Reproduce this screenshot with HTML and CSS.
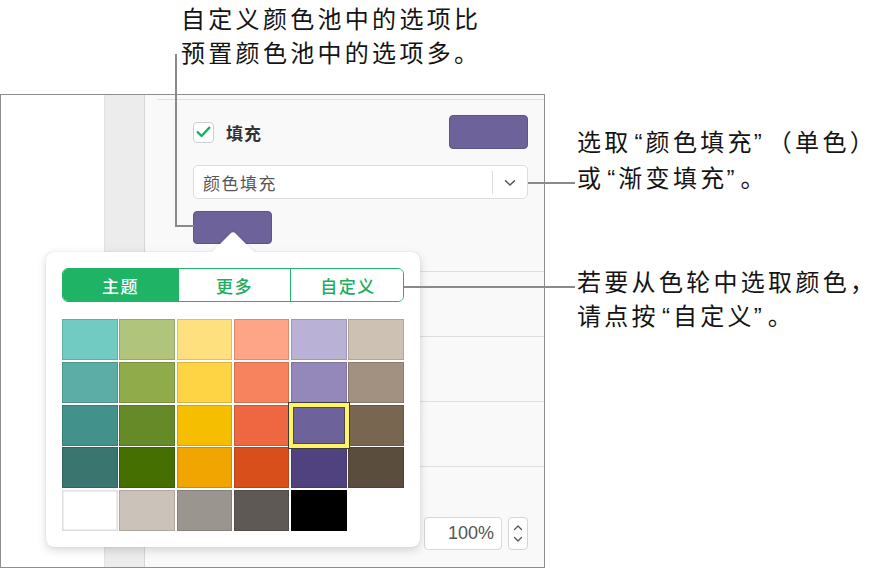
FILE: index.html
```html
<!DOCTYPE html>
<html lang="zh-CN">
<head>
<meta charset="utf-8">
<title>颜色填充</title>
<link rel="stylesheet" href="styles.css">
</head>
<body>
<div class="stage">
  <div class="window">
    <div class="canvas"></div>
    <div class="strip"></div>
    <div class="panel">
      <div class="panel-top"></div>
      <div class="fill-section">
        <div class="fill-row">
          <div class="check">
            <span class="box">
              <svg width="20" height="20" viewBox="0 0 20 20"><path d="M3.8 10.2 L8 14.2 L16.2 5.4" fill="none" stroke="#14b15e" stroke-width="2.4" stroke-linecap="round" stroke-linejoin="round"/></svg>
            </span>
            <span class="check-label">填充</span>
          </div>
          <div class="swatch swatch-big"></div>
        </div>
        <div class="select">
          <span class="select-text">颜色填充</span>
          <span class="select-div"></span>
          <svg class="select-chev" width="12" height="8" viewBox="0 0 12 8"><path d="M1.5 1.8 L6 6 L10.5 1.8" fill="none" stroke="#555" stroke-width="1.5" stroke-linecap="round" stroke-linejoin="round"/></svg>
        </div>
        <div class="swatch swatch-small"></div>
      </div>
      <div class="row"></div>
      <div class="row"></div>
      <div class="row"></div>
      <div class="bottom">
        <div class="pct">100%</div>
        <div class="stepper">
          <svg width="10" height="7" viewBox="0 0 10 7"><path d="M1.5 5.5 L5 2 L8.5 5.5" fill="none" stroke="#555" stroke-width="1.3" stroke-linecap="round" stroke-linejoin="round"/></svg>
          <svg width="10" height="7" viewBox="0 0 10 7"><path d="M1.5 1.5 L5 5 L8.5 1.5" fill="none" stroke="#555" stroke-width="1.3" stroke-linecap="round" stroke-linejoin="round"/></svg>
        </div>
      </div>
    </div>
  </div>

  <div class="popover">
    <svg class="arrow" width="44" height="22" viewBox="0 0 44 22"><path d="M0 22 L19.5 2.5 Q22 0 24.5 2.5 L44 22 Z" fill="#fff"/></svg>
    <div class="tabs">
      <div class="tab active">主题</div>
      <div class="tab">更多</div>
      <div class="tab">自定义</div>
    </div>
    <div class="grid">
      <div class="cell c-72cbc3"></div>
      <div class="cell c-b1c47c"></div>
      <div class="cell c-fee17e"></div>
      <div class="cell c-fea588"></div>
      <div class="cell c-b9b1d6"></div>
      <div class="cell c-cdc1b4"></div>

      <div class="cell c-5cada5"></div>
      <div class="cell c-8fab4a"></div>
      <div class="cell c-fed445"></div>
      <div class="cell c-f7825e"></div>
      <div class="cell c-9488ba"></div>
      <div class="cell c-a29180"></div>

      <div class="cell c-42918a"></div>
      <div class="cell c-678a28"></div>
      <div class="cell c-f5bf00"></div>
      <div class="cell c-ee6741"></div>
      <div class="cell c-6d6299 selected"></div>
      <div class="cell c-786651"></div>

      <div class="cell c-3a7570"></div>
      <div class="cell c-456f00"></div>
      <div class="cell c-f0a500"></div>
      <div class="cell c-d84f1c"></div>
      <div class="cell c-50427f"></div>
      <div class="cell c-5b4d3e"></div>

      <div class="cell c-ffffff"></div>
      <div class="cell c-cbc3ba"></div>
      <div class="cell c-9a958f"></div>
      <div class="cell c-5e5955"></div>
      <div class="cell c-000000"></div>
    </div>
  </div>

  <div class="leader ln-v"></div>
  <div class="leader ln-h1"></div>
  <div class="leader ln-h2"></div>
  <div class="leader ln-h3"></div>

  <div class="callout callout-top">自定义颜色池中的选项比<br>预置颜色池中的选项多。</div>
  <div class="callout callout-fill">选取<span class="q">“</span>颜色填充<span class="qc">”</span>（单色）<br>或<span class="q">“</span>渐变填充<span class="qc">”</span>。</div>
  <div class="callout callout-custom">若要从色轮中选取颜色，<br>请点按<span class="q">“</span>自定义<span class="qc">”</span>。</div>
</div>
</body>
</html>
```

FILE: styles.css
```css
* { box-sizing: border-box; }
html, body { margin: 0; padding: 0; background: #fff; }
body { font-family: "Noto Sans CJK SC", "Noto Sans", sans-serif; text-spacing-trim: space-all; }

.stage {
  position: relative;
  width: 888px;
  height: 569px;
  padding-top: 94px;
  overflow: hidden;
  background: #fff;
}

.window {
  display: flex;
  width: 545px;
  height: 474px;
  border: 1px solid #8e8e8e;
  background: #fff;
}

.canvas { width: 103px; background: #fff; }

.strip {
  width: 41px;
  background: #ececec;
  border-left: 1px solid #e2e2e2;
  border-right: 1px solid #d6d6d6;
}

.panel {
  flex: 1;
  display: flex;
  flex-direction: column;
  background: #f9f9f9;
  padding-top: 4px;
}

.panel-top {
  margin-left: 12px;
  height: 1px;
  background: #dedede;
}

.fill-section {
  margin-left: 12px;
  padding: 15px 16px 27px 36px;
  border-bottom: 1px solid #dedede;
}

.fill-row {
  display: flex;
  align-items: center;
  justify-content: space-between;
  height: 34px;
}

.check { display: flex; align-items: center; gap: 12px; }

.box {
  width: 21px;
  height: 21px;
  border: 1px solid #cfcfcf;
  border-radius: 4px;
  background: #fff;
  display: flex;
  align-items: center;
  justify-content: center;
}

.check-label {
  font-size: 17px;
  font-weight: 700;
  color: #333;
  letter-spacing: 1px;
}

.swatch {
  background: #6d6299;
  border: 1px solid #5d5289;
  border-radius: 4px;
}
.swatch-big { width: 79px; height: 34px; }
.swatch-small { width: 79px; height: 33px; margin-top: 12px; }

.select {
  margin-top: 16px;
  height: 34px;
  display: flex;
  align-items: center;
  background: #fff;
  border: 1px solid #dcdcdc;
  border-radius: 5px;
  padding-left: 9px;
}
.select-text {
  flex: 1;
  font-size: 17px;
  color: #555;
  letter-spacing: 1.5px;
}
.select-div {
  width: 1px;
  height: 23px;
  background: #dadada;
}
.select-chev { margin: 1px 11px 0 11px; }

.row {
  margin-left: 12px;
  height: 65px;
  border-bottom: 1px solid #dedede;
}

.bottom {
  display: flex;
  justify-content: flex-end;
  gap: 6px;
  padding: 50px 16px 0 0;
}

.pct {
  width: 78px;
  height: 33px;
  background: #fff;
  border: 1px solid #d8d8d8;
  border-radius: 4px;
  font-family: "Liberation Sans", Arial, sans-serif;
  font-size: 18px;
  color: #555;
  text-align: right;
  padding-right: 7px;
  line-height: 31px;
}

.stepper {
  width: 20px;
  height: 33px;
  background: #fff;
  border: 1px solid #d4d4d4;
  border-radius: 4px;
  display: flex;
  flex-direction: column;
  align-items: center;
  justify-content: center;
  gap: 5px;
}

/* popover */
.popover {
  position: absolute;
  left: 46px;
  top: 252px;
  width: 374px;
  height: 295px;
  background: #fff;
  border-radius: 8px;
  box-shadow: 0 0 1px rgba(0,0,0,0.18), 0 3px 10px rgba(0,0,0,0.16);
  padding: 16px;
}

.arrow {
  position: absolute;
  left: 165px;
  top: -21px;
  filter: drop-shadow(0 -1px 1px rgba(0,0,0,0.06));
}

.tabs {
  display: grid;
  grid-template-columns: 115px 112px 115px;
  width: 342px;
  height: 34px;
  border: 1.5px solid #22b567;
  border-radius: 6px;
  overflow: hidden;
}

.tab {
  display: flex;
  align-items: center;
  justify-content: center;
  font-size: 17px;
  font-weight: 500;
  letter-spacing: 1.5px;
  color: #1cae5f;
  background: #fff;
}
.tab + .tab { border-left: 1.5px solid #22b567; }
.tab.active { background: #1fb465; color: #fff; }

.grid {
  margin-top: 17px;
  width: 342px;
  display: grid;
  grid-template-columns: repeat(6, 1fr);
  grid-auto-rows: 41px;
  gap: 1.8px;
}

.cell { box-shadow: inset 0 0 0 1px rgba(0,0,0,0.14); }
.cell.selected {
  position: relative;
  z-index: 1;
  box-shadow: 0 0 0 2px #fff463, 0 0 0 3px #3c3c3c, inset 0 0 0 2px #fff463, inset 0 0 0 3px #4a4a4a;
}

.c-72cbc3 { background: #72cbc3; }
.c-b1c47c { background: #b1c47c; }
.c-fee17e { background: #fee17e; }
.c-fea588 { background: #fea588; }
.c-b9b1d6 { background: #b9b1d6; }
.c-cdc1b4 { background: #cdc1b4; }
.c-5cada5 { background: #5cada5; }
.c-8fab4a { background: #8fab4a; }
.c-fed445 { background: #fed445; }
.c-f7825e { background: #f7825e; }
.c-9488ba { background: #9488ba; }
.c-a29180 { background: #a29180; }
.c-42918a { background: #42918a; }
.c-678a28 { background: #678a28; }
.c-f5bf00 { background: #f5bf00; }
.c-ee6741 { background: #ee6741; }
.c-6d6299 { background: #6d6299; }
.c-786651 { background: #786651; }
.c-3a7570 { background: #3a7570; }
.c-456f00 { background: #456f00; }
.c-f0a500 { background: #f0a500; }
.c-d84f1c { background: #d84f1c; }
.c-50427f { background: #50427f; }
.c-5b4d3e { background: #5b4d3e; }
.c-ffffff { background: #ffffff; box-shadow: inset 0 0 0 1.5px #dedede; }
.c-cbc3ba { background: #cbc3ba; }
.c-9a958f { background: #9a958f; }
.c-5e5955 { background: #5e5955; }
.c-000000 { background: #000000; }

/* leader lines */
.leader { position: absolute; background: #8a8a8a; }
.ln-v { left: 175px; top: 54px; width: 2px; height: 173px; }
.ln-h1 { left: 175px; top: 225px; width: 19px; height: 2px; }
.ln-h2 { left: 528px; top: 182px; width: 47px; height: 2px; }
.ln-h3 { left: 404px; top: 286px; width: 171px; height: 2px; }

/* callouts */
.callout {
  position: absolute;
  font-family: "Noto Sans CJK SC", sans-serif;
  font-size: 24px;
  line-height: 34px;
  letter-spacing: 3.3px;
  color: #141414;
  white-space: nowrap;
  text-spacing-trim: space-all;
}
.callout .q {
  font-family: "Liberation Sans", Arial, sans-serif;
  letter-spacing: 3px;
  margin-left: 3px;
}
.callout .qc {
  font-family: "Liberation Sans", Arial, sans-serif;
  letter-spacing: 6px;
  margin-left: -1px;
}
.callout-top { left: 181px; top: 1px; }
.callout-fill { left: 577px; top: 124px; }
.callout-custom { left: 577px; top: 264px; }
```
